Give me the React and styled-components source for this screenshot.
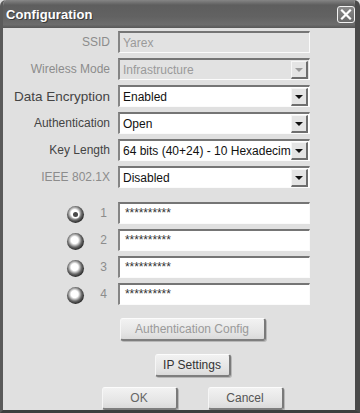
import React from "react";
import styled, { createGlobalStyle } from "styled-components";

const Global = createGlobalStyle`
  html, body { margin: 0; padding: 0; background: #dfdfdf; }
  body { font-family: "Liberation Sans", Arial, sans-serif; overflow: hidden; }
`;

const Window = styled.div`
  box-sizing: border-box;
  width: 360px;
  height: 413px;
  background: #e0e0e0;
  border-left: 3px solid #5a5a5a;
  border-right: 5px solid #4a4a4a;
  border-bottom: 3px solid #3e3e3e;
  border-radius: 6px 6px 0 0;
  display: flex;
  flex-direction: column;
  overflow: hidden;
`;

const TitleBar = styled.div`
  height: 28px;
  flex: none;
  margin: 0 -5px 0 -3px;
  padding: 0 5px 0 6px;
  display: flex;
  align-items: center;
  justify-content: space-between;
  background: linear-gradient(#858585 0%, #5e5e5e 18%, #626262 60%, #6c6c6c 88%, #575757 100%);
  border-radius: 6px 6px 0 0;
`;

const Title = styled.span`
  color: #fff;
  font-weight: bold;
  font-size: 13px;
  text-shadow: 1px 1px 0 #3a3a3a;
  letter-spacing: 0.1px;
`;

const CloseBtn = styled.div`
  box-sizing: border-box;
  width: 18px;
  height: 17px;
  border: 1px solid #f2f2f2;
  border-radius: 3px;
  background: linear-gradient(#8a8a8a, #6a6a6a);
  display: flex;
  align-items: center;
  justify-content: center;
`;

const Content = styled.div`
  padding-top: 3px;
  display: flex;
  flex-direction: column;
`;

const FormGrid = styled.div`
  display: grid;
  grid-template-columns: 107px 192px;
  column-gap: 8px;
  row-gap: 5px;
  grid-auto-rows: 22px;
`;

const Label = styled.div`
  align-self: center;
  text-align: right;
  white-space: nowrap;
  overflow: hidden;
  direction: rtl;
  font-size: ${(p) => p.$size || "12px"};
  color: ${(p) => (p.$dim ? "#8c8c8c" : "#444")};
`;

const Field = styled.div`
  box-sizing: border-box;
  height: 22px;
  display: flex;
  align-items: center;
  background: ${(p) => (p.$disabled ? "#e2e2e2" : "#fff")};
  border-top: 2px solid #757575;
  border-left: 2px solid #858585;
  border-right: 1px solid #fbfbfb;
  border-bottom: 1px solid #fbfbfb;
  padding: 0 1px 0 2px;
  font-size: 12px;
  color: ${(p) => (p.$disabled ? "#9a9a9a" : "#111")};
  overflow: hidden;
`;

const FieldText = styled.span`
  flex: 1;
  white-space: nowrap;
  overflow: hidden;
  padding-left: 1px;
`;

const Stars = styled.span`
  font-size: 12px;
  color: #333;
  align-self: flex-start;
  margin-top: 2px;
  padding-left: 3px;
  letter-spacing: -0.1px;
`;

const DropBtn = styled.div`
  box-sizing: border-box;
  flex: none;
  width: 17px;
  height: 18px;
  background: #e4e4e4;
  border-top: 1px solid #f6f6f6;
  border-left: 1px solid #f6f6f6;
  border-right: 2px solid #6e6e6e;
  border-bottom: 2px solid #6e6e6e;
  display: flex;
  align-items: center;
  justify-content: center;
`;

const Arrow = styled.div`
  width: 0;
  height: 0;
  border-left: 4px solid transparent;
  border-right: 4px solid transparent;
  border-top: 4px solid ${(p) => (p.$dim ? "#9a9a9a" : "#111")};
  margin-top: 1px;
`;

const KeyGrid = styled(FormGrid)`
  margin-top: 14px;
`;

const KeyLead = styled.div`
  display: flex;
  align-items: center;
  justify-content: flex-end;
  gap: 16px;
  padding-right: 3px;
`;

const Radio = styled.div`
  box-sizing: border-box;
  width: 17px;
  height: 17px;
  border-radius: 50%;
  margin-top: 3px;
  background: radial-gradient(circle at 45% 42%, #ffffff 0 26%, #c8c8c8 36%, #6a6a6a 52%, #2e2e2e 70%, #4a4a4a 86%, #9a9a9a 100%);
  display: flex;
  align-items: center;
  justify-content: center;
  &::after {
    content: "";
    width: 5px;
    height: 5px;
    border-radius: 50%;
    background: ${(p) => (p.$checked ? "#4a4a4a" : "transparent")};
    box-shadow: ${(p) => (p.$checked ? "0 0 0 1.5px #ffffff" : "none")};
  }
`;

const Num = styled.span`
  font-size: 12px;
  color: #8c8c8c;
  width: 7px;
  text-align: center;
`;

const Buttons = styled.div`
  display: flex;
  flex-direction: column;
  align-items: center;
  padding-left: 27px;
`;

const Btn = styled.div`
  box-sizing: border-box;
  width: ${(p) => p.$w}px;
  height: 23px;
  margin-top: ${(p) => p.$mt}px;
  border-radius: 3px;
  background: linear-gradient(#f2f2f2, #e4e4e4 70%, #dadada);
  border-top: 1px solid #fcfcfc;
  border-left: 1px solid #f6f6f6;
  border-right: 2px solid #7a7a7a;
  border-bottom: 2px solid #7e7e7e;
  box-shadow: 1px 1px 0 #b8b8b8;
  display: flex;
  align-items: center;
  justify-content: center;
  font-size: 12px;
  color: ${(p) => p.$color};
`;

const BtnRow = styled.div`
  display: flex;
  gap: 30px;
  margin-top: 10px;
`;

function Select({ value, disabled }) {
  return (
    <Field $disabled={disabled}>
      <FieldText>{value}</FieldText>
      <DropBtn>
        <Arrow $dim={disabled} />
      </DropBtn>
    </Field>
  );
}

const rows = [
  { label: "SSID", dim: true, text: "Yarex", disabled: true, select: false },
  { label: "Wireless Mode", dim: true, text: "Infrastructure", disabled: true, select: true },
  { label: "Data Encryption", text: "Enabled", select: true, size: "13.5px" },
  { label: "Authentication", text: "Open", select: true },
  { label: "Key Length", text: "64 bits (40+24) - 10 Hexadecimal digits", select: true },
  { label: "IEEE 802.1X", dim: true, text: "Disabled", select: true },
];

export default function App() {
  return (
    <>
      <Global />
      <Window>
        <TitleBar>
          <Title>Configuration</Title>
          <CloseBtn>
            <svg width="12" height="11" viewBox="0 0 12 11">
              <path d="M2 1.5 L10 9.5 M10 1.5 L2 9.5" stroke="#fff" strokeWidth="2.2" strokeLinecap="square" />
            </svg>
          </CloseBtn>
        </TitleBar>
        <Content>
          <FormGrid>
            {rows.map((r) => (
              <React.Fragment key={r.label}>
                <Label $dim={r.dim} $size={r.size}>{r.label}</Label>
                {r.select ? (
                  <Select value={r.text} disabled={r.disabled} />
                ) : (
                  <Field $disabled={r.disabled}>
                    <FieldText>{r.text}</FieldText>
                  </Field>
                )}
              </React.Fragment>
            ))}
          </FormGrid>
          <KeyGrid>
            {[1, 2, 3, 4].map((n) => (
              <React.Fragment key={n}>
                <KeyLead>
                  <Radio $checked={n === 1} />
                  <Num>{n}</Num>
                </KeyLead>
                <Field>
                  <Stars>**********</Stars>
                </Field>
              </React.Fragment>
            ))}
          </KeyGrid>
          <Buttons>
            <Btn $w={146} $mt={13} $color="#9a9a9a">Authentication Config</Btn>
            <Btn $w={76} $mt={13} $color="#333">IP Settings</Btn>
            <BtnRow>
              <Btn $w={76} $mt={0} $color="#666">OK</Btn>
              <Btn $w={76} $mt={0} $color="#555">Cancel</Btn>
            </BtnRow>
          </Buttons>
        </Content>
      </Window>
    </>
  );
}
